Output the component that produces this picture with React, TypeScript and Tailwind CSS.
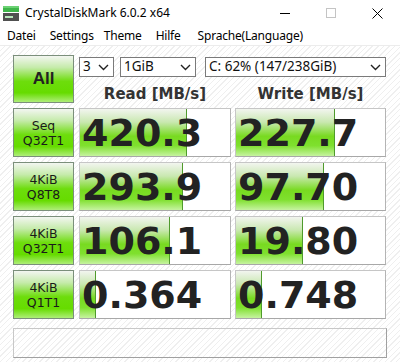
import React from 'react';

const stripes =
  'bg-[repeating-linear-gradient(135deg,#ffffff_0px,#ffffff_3px,#efefef_3px,#efefef_4px)]';

const tests = [
  { l1: 'Seq', l2: 'Q32T1', read: '420.3', write: '227.7', rw: 107, ww: 99 },
  { l1: '4KiB', l2: 'Q8T8', read: '293.9', write: '97.70', rw: 103, ww: 88 },
  { l1: '4KiB', l2: 'Q32T1', read: '106.1', write: '19.80', rw: 90, ww: 67 },
  { l1: '4KiB', l2: 'Q1T1', read: '0.364', write: '0.748', rw: 16, ww: 26 },
];

const Chevron = () => (
  <svg width="11" height="7" viewBox="0 0 11 7" className="shrink-0">
    <path d="M1 1l4.5 4.5L10 1" fill="none" stroke="#222" strokeWidth="1.4" />
  </svg>
);

const Select = ({ value, className }: { value: string; className: string }) => (
  <div
    className={`flex h-[20px] items-center justify-between border border-[#7a7a7a] bg-white pl-[3px] pr-[4px] text-[13.5px] leading-none text-[#111] ${className}`}
  >
    <span>{value}</span>
    <Chevron />
  </div>
);

const Score = ({ value, fill, className }: { value: string; fill: number; className: string }) => (
  <div
    className={`relative h-[49px] border border-[#c6c6c6] border-b-[#a8a8a8] border-r-[#b4b4b4] bg-white ${className}`}
  >
    <div
      className="absolute bottom-0 left-0 top-0 border-r border-[#4f9a2c] bg-[linear-gradient(to_bottom,#f2f5ef_0%,#c9e8b0_28%,#78da20_58%,#7fe02e_78%,#c6f3a0_100%)]"
      style={{ width: fill }}
    />
    <div className="relative flex h-full items-center pl-[2px] font-['DejaVu_Sans',sans-serif] text-[38px] font-bold leading-none text-[#222]">
      {value}
    </div>
  </div>
);

const GreenButton = ({ children, className }: { children: React.ReactNode; className: string }) => (
  <div
    className={`flex flex-col items-center justify-center border border-[#7b8f7b] bg-[linear-gradient(to_bottom,#f3f6f1_0%,#c5ebaa_25%,#6ddd0c_55%,#66dc00_80%,#aeee78_100%)] ${className}`}
  >
    {children}
  </div>
);

const menu = [
  { label: 'Datei', cls: 'ml-[7px]' },
  { label: 'Settings', cls: 'ml-[14px]' },
  { label: 'Theme', cls: 'ml-[10px]' },
  { label: 'Hilfe', cls: 'ml-[14px]' },
  { label: 'Sprache(Language)', cls: 'ml-[17px]' },
];

export default function App() {
  return (
    <div className="flex h-[362px] w-[400px] flex-col overflow-hidden bg-white font-['Noto_Sans',sans-serif] text-black">
      {/* title bar */}
      <div className="flex h-[26px] shrink-0 items-center">
        <svg width="18" height="16" viewBox="0 0 18 16" className="ml-[2px] mt-[1px]">
          <rect x="1" y="0" width="16" height="6" fill="#3fb54a" />
          <rect x="1" y="0" width="16" height="2" fill="#6cd274" />
          <rect x="1" y="7" width="16" height="8" fill="#505050" />
          <rect x="3" y="10" width="8" height="2" fill="#b8e8bc" />
        </svg>
        <span className="ml-[5px] text-[12px] text-black">CrystalDiskMark 6.0.2 x64</span>
        <div className="ml-auto flex h-full items-center">
          <div className="flex h-full w-[46px] items-center justify-center">
            <svg width="10" height="10" viewBox="0 0 10 10">
              <path d="M0 5.5h10" stroke="#000" strokeWidth="1" />
            </svg>
          </div>
          <div className="flex h-full w-[46px] items-center justify-center">
            <svg width="10" height="10" viewBox="0 0 10 10">
              <rect x="0.5" y="0.5" width="9" height="9" fill="none" stroke="#c4c4c4" strokeWidth="1" />
            </svg>
          </div>
          <div className="flex h-full w-[46px] items-center justify-center">
            <svg width="11" height="11" viewBox="0 0 11 11">
              <path d="M0.5 0.5l10 10M10.5 0.5l-10 10" stroke="#000" strokeWidth="1" />
            </svg>
          </div>
        </div>
      </div>

      {/* menu */}
      <div className="flex h-[20px] shrink-0 items-center border-b border-[#ececec] text-[12px] tracking-[-0.2px] text-black">
        {menu.map((m) => (
          <span key={m.label} className={m.cls}>
            {m.label}
          </span>
        ))}
      </div>

      {/* content */}
      <div className={`flex flex-1 flex-col px-[13px] pt-[9px] ${stripes}`}>
        <div className="flex h-[48px]">
          <GreenButton className="h-[48px] w-[61px]">
            <span className="font-['Liberation_Sans',sans-serif] text-[17px] font-bold text-[#222]">All</span>
          </GreenButton>
          <div className="ml-[5px] flex flex-col">
            <div className="mt-[2px] flex">
              <Select value="3" className="w-[35px]" />
              <Select value="1GiB" className="ml-[6px] w-[76px]" />
              <Select value="C: 62% (147/238GiB)" className="ml-[9px] w-[181px]" />
            </div>
            <div className="mt-[10px] flex font-['DejaVu_Sans',sans-serif] text-[15px] font-bold leading-none text-[#333]">
              <div className="w-[152px] text-center">Read [MB/s]</div>
              <div className="ml-[4px] w-[151px] text-center">Write [MB/s]</div>
            </div>
          </div>
        </div>

        <div className="mt-[5px] flex flex-col gap-[5px]">
          {tests.map((t) => (
            <div key={t.read} className="flex">
              <GreenButton className="h-[49px] w-[61px] font-['DejaVu_Sans',sans-serif] text-[12.5px] leading-[15px] text-[#1a1a1a]">
                <span>{t.l1}</span>
                <span>{t.l2}</span>
              </GreenButton>
              <Score value={t.read} fill={t.rw} className="ml-[5px] w-[152px]" />
              <Score value={t.write} fill={t.ww} className="ml-[4px] w-[151px]" />
            </div>
          ))}
        </div>

        <div className="mt-[9px] h-[30px] border border-[#c8c8c8] border-b-[#a0a0a0] border-r-[#a0a0a0]" />
      </div>
    </div>
  );
}
